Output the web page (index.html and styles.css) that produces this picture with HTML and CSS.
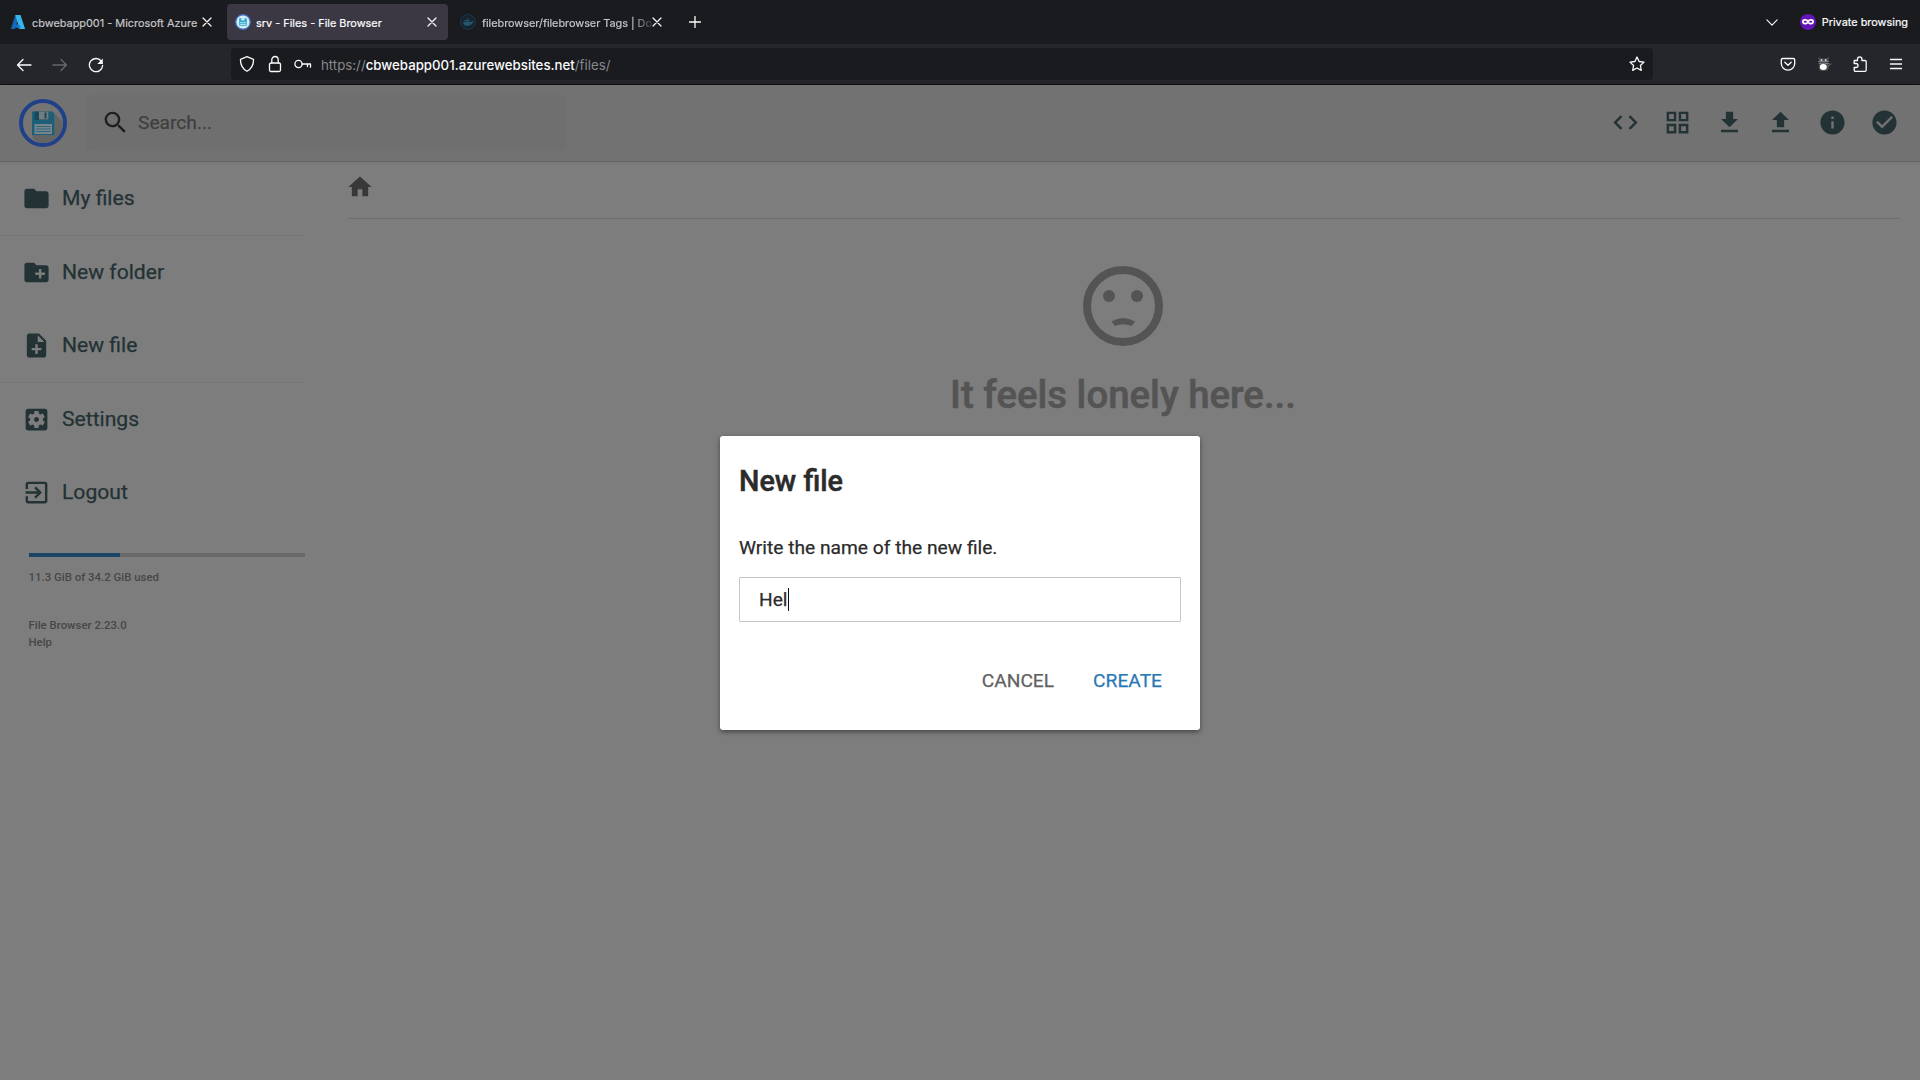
FILE: index.html
```html
<!DOCTYPE html>
<html lang="en">
<head>
<meta charset="utf-8">
<title>srv - Files - File Browser</title>
<link rel="stylesheet" href="styles.css">
</head>
<body>
<svg class="defs" width="0" height="0">
  <symbol id="floppy" viewBox="0 0 48 48">
    <path class="long-shadow" d="M33 12l11 11a20 20 0 0 1-20 21q-5 0-9-3L13 36z"/>
    <path d="M13 12.500h20l2.300 2.300v21.200h-22.300z" fill="#1b6078"/>
    <path d="M15.500 12.500h14.500v8.500H15.500z" fill="#174a5c"/>
    <path d="M20 12.500h9.500v8H20z" fill="#747d80"/>
    <path d="M25.500 13.500h2v6h-2z" fill="#174a5c"/>
    <path d="M15.500 25h17.500v10H15.500z" fill="#78858a"/>
    <path d="M17 27.500h14.500M17 30h14.500M17 32.500h14.500" stroke="#1b6078" stroke-width=".8"/>
  </symbol>
</svg>
<header class="browser">
  <div class="tabs">
    <div class="tab tab-azure">
      <svg class="favicon" viewBox="0 0 16 16"><path d="M5.300 1h4.200L5 15H.9z" fill="#1767b4"/><path d="M5.300 1h5.200l4.600 14H9.500L5 11l3.300-.5-1.400-4z" fill="#38b5ea"/><path d="M3.500 11h6l1.200 3-6-.5z" fill="#1376ca"/></svg>
      <span class="tab-title">cbwebapp001 - Microsoft Azure</span>
      <svg class="close" viewBox="0 0 10 10"><path d="M1 1l8 8M9 1L1 9"/></svg>
    </div>
    <div class="tab tab-active">
      <svg class="favicon" viewBox="0 0 16 16"><circle cx="8" cy="8" r="7.200" fill="#d6edf5" stroke="#4679d2" stroke-width="1.300"/><path d="M4.200 4.200h6.900l.7.700v6.900H4.200z" fill="#2aa7cb"/><path d="M6.300 4.200h3.200v2.300H6.300z" fill="#d9f1f5"/><path d="M5.300 8.700h5.400M5.300 10.400h5.400" stroke="#c6eaf2" stroke-width=".9"/></svg>
      <span class="tab-title">srv - Files - File Browser</span>
      <svg class="close" viewBox="0 0 10 10"><path d="M1 1l8 8M9 1L1 9"/></svg>
    </div>
    <div class="tab tab-docker">
      <svg class="favicon" viewBox="0 0 16 16"><circle cx="8" cy="8" r="7.500" fill="#17242f" stroke="#1c3d50" stroke-width=".8"/><path d="M3 8h8l1.200-1.500.6 1.300 1.200.2-1.600 1Q11 12 7 12 3.500 12 3 8zM4.500 6h5v1.500h-5zM7 4.500h2v1H7z" fill="#24546e"/></svg>
      <span class="tab-title fade">filebrowser/filebrowser Tags | Do</span>
      <svg class="close" viewBox="0 0 10 10"><path d="M1 1l8 8M9 1L1 9"/></svg>
    </div>
    <svg class="new-tab" viewBox="0 0 12 12"><path d="M6 .5v11M.5 6h11"/></svg>
    <div class="private">
      <svg class="chevron" viewBox="0 0 14 8"><path d="M1 1l6 6 6-6"/></svg>
      <svg class="mask" viewBox="0 0 16 16"><circle cx="8" cy="8" r="8" fill="#6415b5"/><path d="M8 5.900C6 4.400 2 4.300 2 7.300c0 4.200 4.500 3.600 6 1.900 1.500 1.700 6 2.300 6-1.900 0-3-4-2.900-6-1.400z" fill="#fff"/><ellipse cx="5.300" cy="7.700" rx="1.600" ry="1" fill="#6415b5"/><ellipse cx="10.700" cy="7.700" rx="1.600" ry="1" fill="#6415b5"/></svg>
      <span>Private browsing</span>
    </div>
  </div>
  <div class="toolbar">
    <div class="nav">
      <svg viewBox="0 0 16 16"><path d="M15 8H1.500M7 2.500L1.500 8 7 13.500"/></svg>
      <svg class="disabled" viewBox="0 0 16 16"><path d="M1 8h13.500M9 2.500L14.500 8 9 13.500"/></svg>
      <svg viewBox="0 0 16 16"><path d="M13.200 4A6.600 6.600 0 1 0 14.600 8.500"/><path d="M14.800 1.500v5.500H9.300z" fill="#fbfbfe" stroke="none"/></svg>
    </div>
    <div class="urlbar">
      <svg class="shield" viewBox="0 0 16 16"><path d="M8 .7l6.500 2.600c.2 5.400-2 9.500-6.500 12C3.500 12.800 1.300 8.700 1.500 3.300z"/></svg>
      <svg class="lock" viewBox="0 0 14 18"><rect x="1.500" y="8" width="11" height="8.500" rx="1.500"/><path d="M3.800 8V4.700a3.200 3.200 0 0 1 6.400 0V8"/></svg>
      <svg class="key" viewBox="0 0 18 10"><circle cx="4.500" cy="5" r="3.600"/><path d="M8 5h8.500v3.200M13.500 5v2.500"/></svg>
      <span class="url">https://<b>cbwebapp001.azurewebsites.net</b>/files/</span>
      <svg class="star" viewBox="0 0 16 16"><path d="M8 1l2.100 4.500 4.900.6-3.600 3.400.9 4.900L8 12l-4.300 2.400.9-4.900L1 6.100l4.900-.6z"/></svg>
    </div>
    <div class="extensions">
      <svg viewBox="0 0 16 16"><path d="M2.700 2.500h10.600c.8 0 1.400.5 1.400 1.300V7.500a6.700 6.700 0 0 1-13.400 0V3.800c0-.8.600-1.300 1.400-1.300z"/><path d="M4.800 6.300L8 9.300l3.200-3"/></svg>
      <svg viewBox="0 0 16 16"><path d="M2 1l3.500 1.500h4L13 1l-1 5.500 1 5.500-2 3H4.500l-2-3 1-5.500z" fill="#4b4b4e" stroke="none"/><path d="M2.500 5.500h10M3 7.500h10M12 10l3-2" stroke="#999" stroke-width=".7" stroke-dasharray="2 1"/><circle cx="5.500" cy="4" r="1" fill="#ccc" stroke="none"/><circle cx="9.700" cy="4" r="1" fill="#ccc" stroke="none"/><ellipse cx="7.300" cy="11" rx="3.500" ry="3" fill="#fff" stroke="none"/></svg>
      <svg class="puzzle" viewBox="0 0 16 18"><path d="M2.200 5.500h3.300V4a2.200 2.200 0 0 1 4.400 0v1.500h3c.8 0 1.300.5 1.300 1.300V15c0 .8-.5 1.300-1.300 1.300H3.500c-.8 0-1.300-.5-1.300-1.300v-2.500H4a2 2 0 0 0 0-4H2.200z"/></svg>
      <svg viewBox="0 0 16 16"><path d="M2.500 3.500h11M2.500 8h11M2.500 12.500h11"/></svg>
    </div>
  </div>
</header>

<div class="page">
  <header class="app-header">
    <svg class="logo" viewBox="0 0 48 48"><circle cx="24" cy="24" r="22" fill="#757575" stroke="#20408a" stroke-width="4"/><use href="#floppy"/></svg>
    <div class="search">
      <svg class="icon" viewBox="0 0 24 24"><path d="M15.500 14h-.79l-.28-.27A6.471 6.471 0 0 0 16 9.500 6.500 6.500 0 1 0 9.500 16c1.610 0 3.090-.59 4.230-1.570l.27.28v.79l5 4.990L20.490 19l-4.990-5zm-6 0C7.010 14 5 11.990 5 9.500S7.010 5 9.500 5 14 7.010 14 9.500 11.990 14 9.500 14z"/></svg>
      <span>Search...</span>
    </div>
    <div class="actions">
      <svg class="icon" viewBox="0 0 24 24"><path d="M9.400 16.600L4.800 12l4.600-4.600L8 6l-6 6 6 6 1.400-1.400zm5.200 0l4.600-4.600-4.600-4.600L16 6l6 6-6 6-1.400-1.400z"/></svg>
      <svg class="icon" viewBox="0 0 24 24"><path fill-rule="evenodd" d="M3 3v8h8V3H3zm6 6H5V5h4v4zm-6 4v8h8v-8H3zm6 6H5v-4h4v4zm4-16v8h8V3h-8zm6 6h-4V5h4v4zm-6 4v8h8v-8h-8zm6 6h-4v-4h4v4z"/></svg>
      <svg class="icon" viewBox="0 0 24 24"><path d="M19 9h-4V3H9v6H5l7 7 7-7zM5 18v2h14v-2H5z"/></svg>
      <svg class="icon" viewBox="0 0 24 24"><path d="M9 16h6v-6h4l-7-7-7 7h4zm-4 2h14v2H5z"/></svg>
      <svg class="icon" viewBox="0 0 24 24"><path d="M12 2C6.480 2 2 6.480 2 12s4.480 10 10 10 10-4.480 10-10S17.520 2 12 2zm1 15h-2v-6h2v6zm0-8h-2V7h2v2z"/></svg>
      <svg class="icon" viewBox="0 0 24 24"><path d="M12 2C6.480 2 2 6.480 2 12s4.480 10 10 10 10-4.480 10-10S17.520 2 12 2zm-2 15l-5-5 1.410-1.410L10 14.170l7.590-7.590L19 8l-9 9z"/></svg>
    </div>
  </header>
  <div class="body">
    <nav class="sidebar">
      <div class="group">
        <div class="item"><svg class="icon" viewBox="0 0 24 24"><path d="M10 4H4c-1.100 0-1.990.9-1.990 2L2 18c0 1.100.9 2 2 2h16c1.100 0 2-.9 2-2V8c0-1.100-.9-2-2-2h-8l-2-2z"/></svg><span>My files</span></div>
      </div>
      <div class="group">
        <div class="item"><svg class="icon" viewBox="0 0 24 24"><path d="M20 6h-8l-2-2H4c-1.110 0-1.990.89-1.990 2L2 18c0 1.110.89 2 2 2h16c1.110 0 2-.89 2-2V8c0-1.110-.89-2-2-2zm-1 8h-3v3h-2v-3h-3v-2h3V9h2v3h3v2z"/></svg><span>New folder</span></div>
        <div class="item"><svg class="icon" viewBox="0 0 24 24"><path d="M14 2H6c-1.100 0-1.990.9-1.990 2L4 20c0 1.100.89 2 1.990 2H18c1.100 0 2-.9 2-2V8l-6-6zm2 14h-3v3h-2v-3H8v-2h3v-3h2v3h3v2zm-3-7V3.500L18.500 9H13z"/></svg><span>New file</span></div>
      </div>
      <div class="group">
        <div class="item"><svg class="icon" viewBox="0 0 24 24"><path d="M12 10c-1.100 0-2 .9-2 2s.9 2 2 2 2-.9 2-2-.9-2-2-2zm7-7H5c-1.110 0-2 .9-2 2v14c0 1.100.89 2 2 2h14c1.110 0 2-.9 2-2V5c0-1.100-.89-2-2-2zm-1.750 9c0 .23-.02.460-.05.680l1.480 1.160c.13.110.17.300.08.450l-1.400 2.420c-.09.150-.27.210-.43.150l-1.740-.7c-.36.280-.76.510-1.180.69l-.26 1.850c-.03.170-.18.300-.35.300h-2.800c-.17 0-.32-.13-.35-.29l-.26-1.850c-.43-.18-.82-.41-1.180-.69l-1.740.7c-.16.060-.34 0-.43-.15l-1.400-2.420c-.09-.15-.05-.34.080-.45l1.480-1.160c-.03-.23-.05-.46-.05-.69s.020-.46.050-.68l-1.480-1.160c-.13-.11-.17-.3-.08-.45l1.400-2.420c.090-.15.270-.21.430-.15l1.740.7c.360-.28.760-.51 1.180-.69l.26-1.850c.030-.17.180-.3.350-.3h2.800c.17 0 .32.130.35.290l.26 1.850c.43.180.82.410 1.180.69l1.740-.7c.16-.06.340 0 .43.150l1.400 2.420c.09.150.05.340-.08.450l-1.480 1.160c.03.230.05.460.05.690z"/></svg><span>Settings</span></div>
        <div class="item"><svg class="icon" viewBox="0 0 24 24"><path d="M10.090 15.590L11.500 17l5-5-5-5-1.410 1.410L12.670 11H3v2h9.670l-2.580 2.590zM19 3H5c-1.110 0-2 .9-2 2v4h2V5h14v14H5v-4H3v4c0 1.100.89 2 2 2h14c1.100 0 2-.9 2-2V5c0-1.100-.9-2-2-2z"/></svg><span>Logout</span></div>
      </div>
      <div class="usage">
        <div class="bar"><div class="bar-fill" style="width:33%"></div></div>
        <span>11.3 GiB of 34.2 GiB used</span>
      </div>
      <div class="credits"><span>File Browser 2.23.0</span><span>Help</span></div>
    </nav>
    <main class="main">
      <div class="breadcrumbs"><svg class="icon" viewBox="0 0 24 24"><path d="M10 20v-6h4v6h5v-8h3L12 3 2 12h3v8z"/></svg></div>
      <h2 class="message">
        <svg class="face" viewBox="0 0 80 80"><circle cx="40" cy="40" r="36" fill="none" stroke="#545454" stroke-width="8"/><circle cx="26" cy="30" r="6"/><circle cx="54" cy="30" r="6"/><path d="M28.500 55.500Q40 48.500 52 55.500L48.500 60Q40 56.500 32 60z"/></svg>
        <span>It feels lonely here...</span>
      </h2>
    </main>
  </div>
  <div class="dialog">
    <h2 class="dialog-title">New file</h2>
    <p class="dialog-text">Write the name of the new file.</p>
    <div class="field"><span>Hel</span><i class="caret"></i></div>
    <div class="buttons"><span class="cancel">CANCEL</span><span class="create">CREATE</span></div>
  </div>
</div>
</body>
</html>
```
FILE: styles.css
```css
* { box-sizing: border-box; }
body { margin: 0; height: 1080px; overflow: hidden; display: flex; flex-direction: column; background: #7d7d7d; font-family: Roboto, sans-serif; }
svg { display: block; flex: none; }
.defs { position: absolute; }
.long-shadow { fill: #636565; }

.browser { height: 85px; flex: none; background: #25262b; border-bottom: 1px solid #101013; font-family: Inter, sans-serif; color: #fbfbfe; }
.browser svg { fill: none; stroke: #fbfbfe; stroke-width: 1.300; stroke-linecap: round; stroke-linejoin: round; }
.browser .favicon, .browser .mask { width: 16px; height: 16px; stroke: none; }
.tabs { height: 44px; background: #1a1b1f; display: flex; align-items: center; font-size: 11px; }
.tab { height: 36px; display: flex; align-items: center; border-radius: 4px; color: #c5c5c9; -webkit-text-stroke: .2px; }
.tab-title { flex: 1; min-width: 0; margin-left: 6px; white-space: nowrap; padding-top: 2px; }
.browser .close { width: 10px; height: 10px; stroke-width: 1.200; }
.tab-azure { width: 227px; padding: 0 15px 0 10px; }
.tab-azure .tab-title { font-size: 10.900px; }
.tab-active { width: 221px; padding: 0 11px 0 8px; background: #3b3843; color: #fbfbfe; }
.tab-active .tab-title { font-size: 10.900px; margin-left: 5px; }
.tab-docker { width: 214px; padding: 0 0 0 12px; }
.tab-docker .tab-title { font-size: 10.900px; letter-spacing: -.03px; }
.fade { -webkit-mask-image: linear-gradient(to right, #000 88%, transparent 102%); mask-image: linear-gradient(to right, #000 88%, transparent 102%); }
.browser .new-tab { width: 12px; height: 12px; margin-left: 27px; }
.private { margin-left: auto; display: flex; align-items: center; padding-right: 12px; -webkit-text-stroke: .2px; }
.browser .chevron { width: 12px; height: 7px; margin-right: 22px; }
.private span { margin-left: 6px; font-size: 10.900px; }
.toolbar { height: 40px; display: flex; align-items: center; }
.nav { width: 231px; display: flex; gap: 20px; padding: 1px 0 0 16px; }
.nav svg, .extensions svg { width: 16px; height: 16px; }
.extensions .puzzle { height: 18px; margin-top: -1px; }
.browser .disabled { stroke: #66676b; }
.urlbar { width: 1422px; height: 32px; background: #1a1b1f; border-radius: 4px; display: flex; align-items: center; padding: 0 8px; font-size: 13.250px; }
.shield { width: 16px; height: 16px; }
.lock { width: 14px; height: 18px; margin-left: 13px; }
.key { width: 18px; height: 10px; margin-left: 12px; }
.url { margin-left: 9px; flex: 1; color: #88888d; padding-top: 1px; }
.url b { font-weight: 500; color: #fbfbfe; }
.star { width: 16px; height: 16px; }
.extensions { margin-left: auto; display: flex; gap: 20px; padding-right: 16px; }

.page { flex: 1; display: flex; flex-direction: column; position: relative; color: #233234; -webkit-text-stroke: .25px; }
.icon { width: 29px; height: 29px; fill: currentColor; }
.app-header { height: 77px; flex: none; background: #727272; border-bottom: 1px solid #646464; box-shadow: 0 0 4px rgba(0,0,0,.12); display: flex; align-items: center; padding: 0 19px; z-index: 1; }
.logo { width: 48px; height: 48px; }
.search { width: 480px; height: 56px; margin-left: 19px; border-radius: 6px; background: #6f6f6f; display: flex; align-items: center; padding: 0 0 2px 15px; color: #3f3f3f; font-size: 19.200px; }
.search .icon { color: #202020; margin-right: 8px; }
.actions { margin-left: auto; display: flex; gap: 22.800px; padding: 0 2px 2px 0; }
.body { flex: 1; display: flex; }
.sidebar { width: 305px; }
.group { border-bottom: 1px solid #767676; }
.group:nth-child(3) { border: 0; }
.item { height: 73px; display: flex; align-items: center; padding-left: 22px; gap: 11px; font-size: 21.120px; }
.item span { padding-bottom: 3px; }
.usage, .credits { padding-left: 28.500px; font-size: 11.420px; font-weight: 500; color: #474747; -webkit-text-stroke: 0; }
.usage { margin-top: 24px; }
.bar { height: 4px; background: #696969; margin-bottom: 12px; }
.bar-fill { height: 100%; background: #1b4567; }
.usage span, .credits span { display: block; line-height: 17px; }
.credits { margin-top: 31px; }
.main { flex: 1; padding: 0 20px 0 43px; }
.breadcrumbs { height: 57px; border-bottom: 1px solid #6e6e6e; padding-top: 11px; color: #383838; }
.breadcrumbs .icon { width: 28px; height: 28px; margin-left: -2px; }
.message { margin: 47px 2px 0 0; display: flex; flex-direction: column; align-items: center; color: #545454; font-size: 38.400px; line-height: 46px; font-weight: 500; -webkit-text-stroke: .6px; }
.face { width: 80px; height: 80px; fill: #545454; margin-bottom: 26px; }
.dialog { position: absolute; left: 720px; top: 351px; width: 480px; height: 294px; background: #fff; border-radius: 3px; box-shadow: 0 2px 5px rgba(0,0,0,.45); padding: 27px 19px 0; color: #2b2b2b; z-index: 2; }
.dialog-title { margin: 0; font-size: 28.800px; line-height: 36px; font-weight: 500; -webkit-text-stroke: .5px; }
.dialog-text { margin: 37px 0 17px; font-size: 19.200px; line-height: 24px; }
.field { height: 45px; border: 1px solid #c6c6c6; border-radius: 1px; display: flex; align-items: center; padding-left: 19px; font-size: 19.200px; }
.caret { width: 1px; height: 23px; background: #111; }
.buttons { display: flex; justify-content: flex-end; gap: 39px; padding-right: 19px; margin-top: 46px; font-size: 19.200px; line-height: 25px; }
.cancel { color: #616161; }
.create { color: #2979b5; }
```
